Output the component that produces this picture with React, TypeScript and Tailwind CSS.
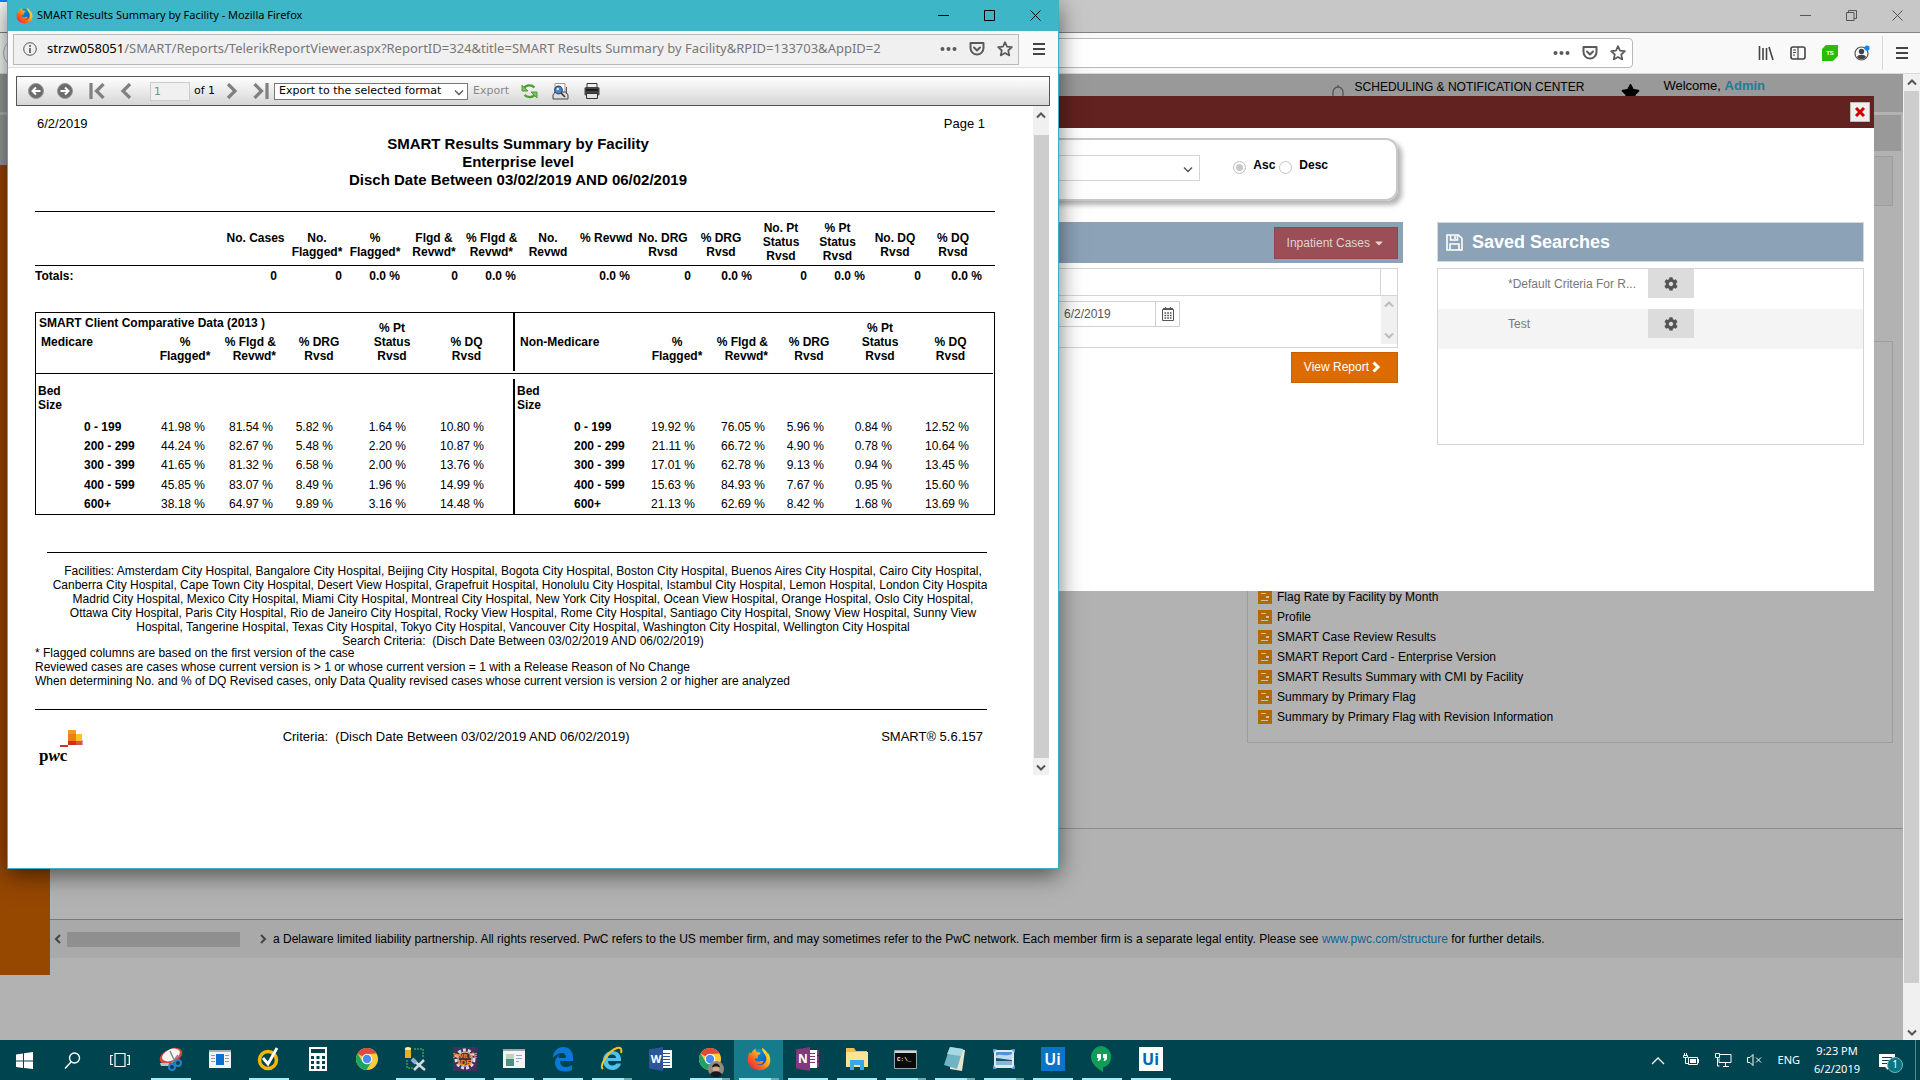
import React from "react";
import { FaCog, FaStar, FaCaretDown } from "react-icons/fa";

const ARIAL = "font-['Liberation_Sans',Arial,sans-serif]";
const UI = "font-['Noto_Sans','Open_Sans',sans-serif]";

type Dir = "up" | "down" | "left" | "right";

const CHEVRONS: Record<Dir, string> = {
  up: "M2 7.5 L6 3.5 L10 7.5",
  down: "M2 4.5 L6 8.5 L10 4.5",
  left: "M8 2 L4 6 L8 10",
  right: "M4 2 L8 6 L4 10",
};

function Chevron({ dir, color = "#555", width = 2 }: { dir: Dir; color?: string; width?: number }) {
  return (
    <svg width="12" height="12" viewBox="0 0 12 12" fill="none" stroke={color} strokeWidth={width} aria-hidden="true">
      <path d={CHEVRONS[dir]} />
    </svg>
  );
}

function FirefoxLogo({ size }: { size: number }) {
  return (
    <svg width={size} height={size} viewBox="0 0 32 32" aria-hidden="true">
      <defs>
        <linearGradient id="fxBody" x1="1" y1="0" x2="0" y2="1">
          <stop offset="0" stopColor="#fff14a" />
          <stop offset="0.35" stopColor="#ffb81c" />
          <stop offset="0.65" stopColor="#ff5e1f" />
          <stop offset="1" stopColor="#e3134f" />
        </linearGradient>
        <linearGradient id="fxGlobe" x1="0" y1="0" x2="1" y2="1">
          <stop offset="0" stopColor="#00b3f4" />
          <stop offset="1" stopColor="#1b3ea8" />
        </linearGradient>
      </defs>
      <circle cx="16" cy="15" r="12" fill="url(#fxGlobe)" />
      <path
        d="M3 7c1 1 2 1 3 1 1-3 3-5 6-6-1 2-1 3 0 4 2 1 5 1 6 2 0 2-3 2-4 4 1 1 1 2 0 3-2 0-3 0-4 1 1 3 4 4 7 3 3-1 5 0 5 1-2 3-7 4-10 2 3 3 9 3 12-1 3-4 2-9-1-12-1-2-3-4-3-8 5 3 7 6 8 9 0-1 0-2-1-3 3 3 4 7 4 11 0 8-7 13-15 13S1 25 1 17c0-4 1-7 2-10z"
        fill="url(#fxBody)"
      />
    </svg>
  );
}

function ChromeLogo() {
  return (
    <svg width="24" height="28" viewBox="0 0 24 28" aria-hidden="true">
      <g transform="translate(0 2)">
        <circle cx="12" cy="12" r="11" fill="#fccb3a" />
        <path d="M12 12 L2.5 6.5 A11 11 0 0 1 21.5 6.500 L12 7z" fill="#dd4b3e" />
        <path d="M2.500 6.500 A11 11 0 0 0 11.500 23 L16.500 14.500 L7.500 14.500z" fill="#1da462" />
        <circle cx="12" cy="12" r="5.300" fill="#fff" />
        <circle cx="12" cy="12" r="4.200" fill="#4a8af4" />
      </g>
    </svg>
  );
}

function WindowButtons({ color, restore }: { color: string; restore?: boolean }) {
  return (
    <div className="flex">
      <button aria-label="Minimize" className="flex h-[31px] w-[46px] items-center justify-center">
        <svg width="11" height="11" stroke={color} fill="none"><path d="M0 5.500h11" /></svg>
      </button>
      <button aria-label="Maximize" className="flex h-[31px] w-[46px] items-center justify-center">
        {restore ? (
          <svg width="11" height="11" stroke={color} fill="none"><path d="M.5 2.500h7.500v8h-7.500zM2.500 2.500v-2h8v8h-2.500" /></svg>
        ) : (
          <svg width="11" height="11" stroke={color} fill="none"><path d="M.5 .5h10v10h-10z" /></svg>
        )}
      </button>
      <button aria-label="Close" className="flex h-[31px] w-[46px] items-center justify-center">
        <svg width="11" height="11" stroke={color} fill="none"><path d="M.5 .5l10 10M10.500 .5l-10 10" /></svg>
      </button>
    </div>
  );
}

function AddressActions() {
  return (
    <div className="flex shrink-0 items-center gap-3">
      <button aria-label="Page actions">
        <svg width="17" height="16" fill="#5a5a5c"><circle cx="2.500" cy="8" r="2" /><circle cx="8.500" cy="8" r="2" /><circle cx="14.500" cy="8" r="2" /></svg>
      </button>
      <button aria-label="Save to Pocket">
        <svg width="16" height="16" viewBox="0 0 16 16" fill="none" stroke="#5a5a5c" strokeWidth="2" strokeLinecap="round" strokeLinejoin="round"><path d="M1.500 2h13v5a6.500 6.500 0 0 1-13 0z" /><path d="M5 6.500l3 3 3-3" /></svg>
      </button>
      <button aria-label="Bookmark this page">
        <svg width="16" height="16" viewBox="0 0 16 16" fill="none" stroke="#5a5a5c" strokeWidth="1.700" strokeLinejoin="round"><path d="M8 1.200l2 4.500 4.900.5-3.700 3.300 1.100 4.900L8 11.900l-4.300 2.500 1.100-4.900L1.100 6.200l4.900-.5z" /></svg>
      </button>
    </div>
  );
}

function MenuIcon() {
  return (
    <svg width="12" height="14" stroke="#444" strokeWidth="2"><path d="M0 2h12M0 7h12M0 12h12" /></svg>
  );
}

/* ---------- Main browser window ---------- */

const REPORT_LINKS = [
  "Flag Rate by Facility by Month",
  "Profile",
  "SMART Case Review Results",
  "SMART Report Card - Enterprise Version",
  "SMART Results Summary with CMI by Facility",
  "Summary by Primary Flag",
  "Summary by Primary Flag with Revision Information",
];

function ReportIcon() {
  return (
    <svg width="14" height="14" viewBox="0 0 14 14" className="shrink-0" aria-hidden="true">
      <path fill="#b06a00" d="M0 0h14v14H0z" />
      <path stroke="#c9c2b6" fill="none" d="M3 3.500h5M8 6.500h3M8 7.500h3M3 10.500h7" />
    </svg>
  );
}

function BrowserChrome() {
  return (
    <header className="shrink-0">
      <div className="flex h-[33px] justify-between border-b border-[#828282] bg-[#c7c7c7]">
        <div className="w-60 border-t-2 border-[#0a84ff] bg-[#f9f9f9]" />
        <WindowButtons color="#555" restore />
      </div>
      <div className="flex h-[41px] items-center border-b border-[#d8d8d8] bg-[#f9f9f9] pl-[3px] pr-3">
        <button aria-label="Back" className="mr-24 size-[30px] shrink-0 rounded-full border border-[#b0b0b0] bg-white" />
        <div className="mr-[125px] flex h-[30px] flex-1 items-center justify-end rounded-sm border border-[#b9b9b9] bg-white pr-[6px]">
          <AddressActions />
        </div>
        <div className="flex items-center gap-4">
          <button aria-label="Library">
            <svg width="16" height="16" stroke="#444" strokeWidth="1.600"><path d="M1.500 1v14M5 3v12M8.500 3v12M11 2l4 13" /></svg>
          </button>
          <button aria-label="Sidebars">
            <svg width="16" height="16" fill="none" stroke="#444" strokeWidth="1.600"><rect x="1" y="2" width="14" height="12" rx="2" /><path d="M8 2v12M3 5h3M3 7.500h3M3 10h2" strokeWidth="1.200" /></svg>
          </button>
          <button aria-label="TS extension">
            <svg width="16" height="16"><path d="M4 0h12v11l-5 5H0V4z" fill="#27bf06" /><text x="8" y="10" textAnchor="middle" fontSize="6" fontWeight="700" fill="#fff" fontFamily="Liberation Sans">TS</text></svg>
          </button>
          <button aria-label="Account">
            <svg width="16" height="16" viewBox="0 0 16 16"><circle cx="7.500" cy="8.500" r="6.500" fill="none" stroke="#555" strokeWidth="1.200" /><circle cx="7.500" cy="6.500" r="2.700" fill="#444" /><path d="M3 12c1-3 8-3 9 0-2 3-7 3-9 0z" fill="#444" /><circle cx="13" cy="3" r="2.600" fill="#0a84ff" /></svg>
          </button>
        </div>
        <div className="ml-3 mr-[13px] h-[34px] w-px bg-[#d8d8d8]" />
        <button aria-label="Menu"><MenuIcon /></button>
      </div>
    </header>
  );
}

function SavedSearchRow({ name, shaded }: { name: string; shaded?: boolean }) {
  return (
    <li className={shaded ? "flex h-10 items-start bg-[#f4f4f4] pl-[70px]" : "flex h-10 items-start pl-[70px]"}>
      <a href="#" className="w-[140px] whitespace-nowrap pt-2 leading-[14px] text-[#777]">{name}</a>
      <button aria-label={`Options for ${name}`} className="flex h-[29px] w-[46px] items-center justify-center bg-[#dcdcdc] text-[#555]">
        <FaCog size={14} />
      </button>
    </li>
  );
}

function CriteriaDialog() {
  return (
    <section role="dialog" aria-label="Report criteria" className="absolute inset-x-[29px] top-[22px] min-h-[495px] bg-white text-xs">
      <div className="flex h-8 items-center justify-end bg-[#612220] pr-1">
        <button aria-label="Close dialog" className="flex size-5 items-center justify-center border border-[#bbb] bg-[#eee]">
          <svg width="10" height="10" stroke="#d00000" strokeWidth="3"><path d="M1 1l8 8M9 1L1 9" /></svg>
        </button>
      </div>
      <div className="flex pr-[10px]">
        <div className="mr-[34px] min-w-0 flex-1 pl-4 pt-[10px]">
          <div className="mr-[5px] flex h-[63px] items-start justify-end rounded-xl border-2 border-[#c8c8c8] pt-[15px] shadow-[4px_4px_5px_rgba(0,0,0,0.3)]">
            <div className="relative">
              <select aria-label="Sort by" className="h-[26px] w-80 appearance-none border border-[#d5d5d5] bg-white" />
              <span className="pointer-events-none absolute right-[6px] top-2"><Chevron dir="down" width={1.5} /></span>
            </div>
            <div className="ml-[33px] mr-[68px] flex items-start font-bold leading-4">
              <input id="asc" type="radio" name="order" defaultChecked className="mr-[7px] mt-[6px] size-[13px] appearance-none rounded-full border border-[#c4c4c4] bg-[#c8c8c8] ring-2 ring-inset ring-white" />
              <label htmlFor="asc" className="pt-[2px]">Asc</label>
              <input id="desc" type="radio" name="order" className="ml-1 mr-[7px] mt-[6px] size-[13px] appearance-none rounded-full border border-[#c4c4c4] bg-white" />
              <label htmlFor="desc" className="pt-[2px]">Desc</label>
            </div>
          </div>
          <div className="mt-[21px] flex h-[41px] items-center justify-end bg-[#8ca2b7] pr-[5px]">
            <button className="flex h-8 items-center gap-[3px] border border-[#8f454c] bg-[#9b4e55] px-3 text-[#dfd3d6]">
              Inpatient Cases <FaCaretDown size={12} />
            </button>
          </div>
          <div className="mr-[5px] mt-[5px] border border-[#d5d5d5]">
            <div className="flex h-[27px] justify-end border-b border-[#d5d5d5]"><div className="w-[17px] border-l border-[#d5d5d5]" /></div>
            <div className="flex h-[51px] justify-end">
              <div className="mr-[201px] mt-[5px] flex h-[26px] border border-[#d0d0d0]">
                <input aria-label="End date" defaultValue="6/2/2019" className="w-[96px] pl-[5px] text-[#555]" />
                <button aria-label="Open calendar" className="flex w-6 items-center justify-center border-l border-[#d0d0d0]">
                  <svg width="12" height="14" fill="none" stroke="#555"><path d="M.5 2.500h11v11H.5zM1 1.500h10M3.500 0v2M8.500 0v2" /><path d="M2.500 6h7M2.500 8.500h7M2.500 11h7" strokeWidth="1.500" strokeDasharray="1.700 1" /></svg>
                </button>
              </div>
              <div className="flex h-12 w-4 flex-col items-center justify-between bg-[#f0f0f0] py-[3px]">
                <Chevron dir="up" color="#bbb" /><Chevron dir="down" color="#bbb" />
              </div>
            </div>
          </div>
          <div className="mr-[5px] mt-1 flex justify-end">
            <button className="flex h-[31px] items-center border border-[#c86000] bg-[#de6b00] pb-[2px] pl-3 pr-4 text-white">
              View Report
              <svg width="9" height="12" className="ml-[3px]" fill="none" stroke="#fff" strokeWidth="3"><path d="M1.500 1.500L6 6l-4.500 4.500" /></svg>
            </button>
          </div>
        </div>
        <div className="w-[427px] shrink-0 pt-[94px]">
          <h2 className="flex h-10 items-center gap-[9px] border border-[#d5d8dc] bg-[#8ca2b7] px-2 text-lg font-bold text-white">
            <svg width="17" height="17" fill="none" stroke="#fff" strokeWidth="1.600"><path d="M1 1h11.500L16 4.500V16H1zM4.500 1v5h7V1M4 16v-6h9v6" /><path d="M9 2v3" /></svg>
            Saved Searches
          </h2>
          <ul className="mt-[6px] h-[177px] border border-[#d5d5d5]">
            <SavedSearchRow name="*Default Criteria For R..." />
            <SavedSearchRow name="Test" shaded />
          </ul>
        </div>
      </div>
    </section>
  );
}

function MainPage() {
  return (
    <div className="flex min-h-0 flex-1">
      <main className="relative flex min-w-0 flex-1 flex-col bg-[#b2b2b2] text-xs text-black">
        <div className="flex h-[38px] justify-end bg-[#999] pr-[138px]">
          <svg width="12" height="16" className="mr-[11px] mt-[11px]" fill="none" stroke="#555" strokeWidth="1.300"><path d="M6 0v2M1 14V7a5 5 0 0 1 10 0v7" /></svg>
          <span className="pt-[5px] leading-4">SCHEDULING &amp; NOTIFICATION CENTER</span>
          <FaStar size={19} className="ml-[37px] mr-[23px] mt-[9px]" />
          <span className="pt-1 text-[13px] leading-4">Welcome, <a href="#" className="font-bold text-[#1f7c98]">Admin</a></span>
        </div>
        <div className="mr-[2px] mt-[3px] h-9 bg-[#999]" />
        <div className="flex h-[824px]">
          <aside className="w-[50px] shrink-0 border-t-[14px] border-[#999] bg-[#964700]" />
          <div className="flex min-w-0 flex-1 flex-col">
            <div className="ml-3 mr-[10px] mt-[5px] h-[50px] border border-[#9d9d9d] bg-[#aaa]" />
            <ul className="ml-auto mr-[10px] mt-[135px] flex h-[402px] w-[646px] flex-col justify-end border border-[#9d9d9d] pb-[15px] pl-[10px]">
              {REPORT_LINKS.map((r) => (
                <li key={r} className="flex h-5 items-center gap-[5px]"><ReportIcon /><a href="#" className="leading-4">{r}</a></li>
              ))}
            </ul>
            <hr className="mt-[85px] border-[#8c8c8c]" />
            <footer className="mt-[90px] flex h-[39px] items-center border-t border-[#777] bg-[#a9a9a9]">
              <div className="mr-1 flex h-[15px] w-[219px] shrink-0 items-center justify-between pl-[2px]">
                <Chevron dir="left" color="#444" />
                <span className="mr-auto ml-[3px] h-[15px] w-[173px] bg-[#8f8f8f]" />
                <Chevron dir="right" color="#444" />
              </div>
              <p className="truncate">
                a Delaware limited liability partnership. All rights reserved. PwC refers to the US member firm, and may sometimes refer to the PwC network. Each member firm is a separate legal entity. Please see{" "}
                <a href="#" className="text-[#0d6594]">www.pwc.com/structure</a> for further details.
              </p>
            </footer>
          </div>
        </div>
        <CriteriaDialog />
      </main>
      <div className="flex w-[17px] flex-col items-center bg-[#f0f0f0]">
        <div className="flex h-[17px] items-center"><Chevron dir="up" /></div>
        <div className="h-[892px] w-[15px] bg-[#cdcdcd]" />
        <div className="mt-auto flex h-[17px] items-center"><Chevron dir="down" /></div>
      </div>
    </div>
  );
}

/* ---------- Report window ---------- */

type TotalCol = { head: string[]; value: string; w: string; th: string; td: string };

const TOTAL_COLS: TotalCol[] = [
  { head: ["No. Cases"], value: "0", w: "w-[61px]", th: "pt-[19px]", td: "pr-[9px]" },
  { head: ["No.", "Flagged*"], value: "0", w: "w-[62px]", th: "pt-[19px]", td: "pr-[6px]" },
  { head: ["%", "Flagged*"], value: "0.0 %", w: "w-[54px]", th: "pt-[19px]", td: "pr-[2px]" },
  { head: ["Flgd &", "Revwd*"], value: "0", w: "w-[64px]", th: "pt-[19px]", td: "pr-[8px]" },
  { head: ["% Flgd &", "Revwd*"], value: "0.0 %", w: "w-[50px]", th: "pt-[19px] pr-[3px] text-right", td: "" },
  { head: ["No.", "Revwd"], value: "", w: "w-[64px]", th: "pt-[19px]", td: "" },
  { head: ["% Revwd"], value: "0.0 %", w: "w-[52px]", th: "pt-[19px]", td: "pr-[2px]" },
  { head: ["No. DRG", "Rvsd"], value: "0", w: "w-[62px]", th: "pt-[19px]", td: "pr-[3px]" },
  { head: ["% DRG", "Rvsd"], value: "0.0 %", w: "w-[60px]", th: "pt-[19px] pr-[6px]", td: "pr-[2px]" },
  { head: ["No. Pt", "Status", "Rvsd"], value: "0", w: "w-[54px]", th: "pt-[9px]", td: "pr-px" },
  { head: ["% Pt", "Status", "Rvsd"], value: "0.0 %", w: "w-[59px]", th: "pt-[9px]", td: "pr-[2px]" },
  { head: ["No. DQ", "Rvsd"], value: "0", w: "w-[56px]", th: "pt-[19px]", td: "pr-[2px]" },
  { head: ["% DQ", "Rvsd"], value: "0.0 %", w: "w-[60px]", th: "pt-[19px]", td: "pr-px" },
];

function TotalsTable() {
  return (
    <table className="w-[960px] table-fixed border-collapse border-t border-black text-xs font-bold leading-[14px]">
      <thead>
        <tr className="h-[54px] border-b border-black align-top">
          <td className="w-[190px]" />
          {TOTAL_COLS.map((c, i) => (
            <th key={i} scope="col" className={`${c.w} ${c.th} whitespace-nowrap`}>
              {c.head.map((h) => <div key={h}>{h}</div>)}
            </th>
          ))}
          <td />
        </tr>
      </thead>
      <tbody>
        <tr className="h-[21px]">
          <th scope="row" className="text-left">Totals:</th>
          {TOTAL_COLS.map((c, i) => <td key={i} className={`${c.td} whitespace-nowrap text-right`}>{c.value}</td>)}
          <td />
        </tr>
      </tbody>
    </table>
  );
}

const COMP_HEADS = [["%", "Flagged*"], ["% Flgd &", "Revwd*"], ["% DRG", "Rvsd"], ["% Pt", "Status", "Rvsd"], ["% DQ", "Rvsd"]];
const BEDS = ["0 - 199", "200 - 299", "300 - 399", "400 - 599", "600+"];

const MEDICARE = [
  ["41.98 %", "81.54 %", "5.82 %", "1.64 %", "10.80 %"],
  ["44.24 %", "82.67 %", "5.48 %", "2.20 %", "10.87 %"],
  ["41.65 %", "81.32 %", "6.58 %", "2.00 %", "13.76 %"],
  ["45.85 %", "83.07 %", "8.49 %", "1.96 %", "14.99 %"],
  ["38.18 %", "64.97 %", "9.89 %", "3.16 %", "14.48 %"],
];
const NON_MEDICARE = [
  ["19.92 %", "76.05 %", "5.96 %", "0.84 %", "12.52 %"],
  ["21.11 %", "66.72 %", "4.90 %", "0.78 %", "10.64 %"],
  ["17.01 %", "62.78 %", "9.13 %", "0.94 %", "13.45 %"],
  ["15.63 %", "84.93 %", "7.67 %", "0.95 %", "15.60 %"],
  ["21.13 %", "62.69 %", "8.42 %", "1.68 %", "13.69 %"],
];

type CompLayout = { table: string; widths: string[]; pads: string[]; label: string };

const LEFT_LAYOUT: CompLayout = {
  table: "w-[477px]",
  widths: ["w-[114px]", "w-[70px]", "w-[58px]", "w-[82px]", "w-[64px]", "w-[89px]"],
  pads: ["pr-[15px]", "pr-[5px]", "pr-[27px]", "pr-[18px]", "pr-[29px]"],
  label: "pl-12",
};
const RIGHT_LAYOUT: CompLayout = {
  table: "w-[478px]",
  widths: ["w-[127px]", "w-[70px]", "w-[58px]", "w-[78px]", "w-[64px]", "w-[81px]"],
  pads: ["pr-[17px]", "pr-[5px]", "pr-[24px]", "pr-[20px]", "pr-[24px]"],
  label: "pl-[59px]",
};

function CompTable({ title, group, rows, layout }: { title?: string; group: string; rows: string[][]; layout: CompLayout }) {
  return (
    <table className={`${layout.table} table-fixed border-collapse leading-[14px]`}>
      <thead>
        <tr className="h-[61px] border-b border-black align-bottom">
          <th scope="col" className={`${layout.widths[0]} whitespace-nowrap pb-6 pl-[5px] text-left`}>
            {title && <div className="-ml-0.5 mb-[5px]">{title}</div>}
            <div>{group}</div>
          </th>
          {COMP_HEADS.map((h, i) => (
            <th key={i} scope="col" className={`${layout.widths[i + 1]} whitespace-nowrap pb-[10px] ${i === 1 ? "pr-[2px] text-right" : i === 4 ? "pr-1" : ""}`}>
              {h.map((l) => <div key={l}>{l}</div>)}
            </th>
          ))}
        </tr>
      </thead>
      <tbody>
        <tr className="h-[43px] align-top">
          <th colSpan={6} scope="rowgroup" className="pl-[2px] pt-[10px] text-left">Bed<br />Size</th>
        </tr>
        {rows.map((r, i) => (
          <tr key={i} className="h-[19px]">
            <th scope="row" className={`${layout.label} whitespace-nowrap text-left`}>{BEDS[i]}</th>
            {r.map((v, j) => <td key={j} className={`${layout.pads[j]} whitespace-nowrap text-right`}>{v}</td>)}
          </tr>
        ))}
      </tbody>
    </table>
  );
}

const FACILITY_LINES = [
  "Facilities: Amsterdam City Hospital, Bangalore City Hospital, Beijing City Hospital, Bogota City Hospital, Boston City Hospital, Buenos Aires City Hospital, Cairo City Hospital,",
  "Canberra City Hospital, Cape Town City Hospital, Desert View Hospital, Grapefruit Hospital, Honolulu City Hospital, Istambul City Hospital, Lemon Hospital, London City Hospital,",
  "Madrid City Hospital, Mexico City Hospital, Miami City Hospital, Montreal City Hospital, New York City Hospital, Ocean View Hospital, Orange Hospital, Oslo City Hospital,",
  "Ottawa City Hospital, Paris City Hospital, Rio de Janeiro City Hospital, Rocky View Hospital, Rome City Hospital, Santiago City Hospital, Snowy View Hospital, Sunny View",
  "Hospital, Tangerine Hospital, Texas City Hospital, Tokyo City Hospital, Vancouver City Hospital, Washington City Hospital, Wellington City Hospital",
  "Search Criteria:\u00a0 (Disch Date Between 03/02/2019 AND 06/02/2019)",
];

function PwcLogo() {
  return (
    <svg width="46" height="38" viewBox="0 0 46 38" role="img" aria-label="pwc">
      <path fill="#f39a1e" d="M29 0h8v12h-8z" />
      <path fill="#ef7d14" d="M29 4h8v7h-8z" />
      <path fill="#f8c51c" d="M37 4h6v7h-6z" />
      <path fill="#c9341a" d="M29 11h8v4h-8z" />
      <path fill="#d9534a" d="M37 11h6v4h-6z" />
      <path fill="#e8a0a8" d="M43 10h1v5h-1z" />
      <path fill="#cc3322" d="M21 15h8v2h-8z" />
      <text x="0" y="31" fontSize="17" fontWeight="700" fontFamily="Liberation Serif, serif">
        p<tspan fontStyle="italic">w</tspan>c
      </text>
    </svg>
  );
}

function ReportBody() {
  return (
    <div className="flex pl-[12px]">
      <div className="min-w-0 flex-1 overflow-hidden pl-[15px] pt-[10px]">
        <article className="w-[960px] text-xs text-black">
          <div className="flex justify-between pl-[2px] pr-[10px] text-[13px] leading-4">
            <span>6/2/2019</span><span>Page 1</span>
          </div>
          <h1 className="mb-[22px] mt-[3px] pl-[6px] text-center text-[15px] font-bold leading-[18px]">
            SMART Results Summary by Facility<br />Enterprise level<br />Disch Date Between 03/02/2019 AND 06/02/2019
          </h1>
          <TotalsTable />
          <section className="mt-[25px] flex h-[203px] border border-black">
            <CompTable title="SMART Client Comparative Data (2013 )" group="Medicare" rows={MEDICARE} layout={LEFT_LAYOUT} />
            <div className="flex w-[2px] flex-col">
              <div className="h-[58px] bg-black" />
              <div className="mt-[2px] mb-[5px] h-px bg-black" />
              <div className="flex-1 bg-black" />
            </div>
            <CompTable group="Non-Medicare" rows={NON_MEDICARE} layout={RIGHT_LAYOUT} />
          </section>
          <div className="ml-3 mr-2 mt-[37px] overflow-hidden border-t border-black pt-[11px]">
            <div className="w-[952px] text-center leading-[14px]">
              {FACILITY_LINES.map((l) => <div key={l} className="whitespace-nowrap">{l}</div>)}
            </div>
          </div>
          <p className="-mt-0.5 leading-[14px]">
            * Flagged columns are based on the first version of the case<br />
            Reviewed cases are cases whose current version is &gt; 1 or whose current version = 1 with a Release Reason of No Change<br />
            When determining No. and % of DQ Revised cases, only Data Quality revised cases whose current version is version 2 or higher are analyzed
          </p>
          <footer className="mr-2 mt-[21px] flex items-start justify-between border-t border-black pl-1 pr-1 pt-[18px] text-[13px] leading-[18px]">
            <span className="pt-[2px]"><PwcLogo /></span>
            <span className="mr-[54px]">Criteria:&nbsp; (Disch Date Between 03/02/2019 AND 06/02/2019)</span>
            <span>SMART® 5.6.157</span>
          </footer>
        </article>
      </div>
      <div className="mr-[9px] flex h-[669px] w-4 flex-col items-center bg-[#f0f0f0]">
        <div className="flex h-[29px] items-start pt-1"><Chevron dir="up" /></div>
        <div className="w-[15px] flex-1 bg-[#cdcdcd]" />
        <div className="flex h-[17px] items-center"><Chevron dir="down" /></div>
      </div>
    </div>
  );
}

function RoundArrow({ flip }: { flip?: boolean }) {
  return (
    <svg width="16" height="16" viewBox="0 0 16 16" className={flip ? "-scale-x-100" : ""}>
      <circle cx="8" cy="8" r="7.500" fill="#6c6c6c" stroke="#999" />
      <path d="M12.500 8H5M8 4.500L4.500 8 8 11.500" fill="none" stroke="#fff" strokeWidth="2" />
    </svg>
  );
}

function PageArrow({ end, flip }: { end?: boolean; flip?: boolean }) {
  return (
    <svg width="16" height="16" viewBox="0 0 16 16" className={flip ? "-scale-x-100" : ""} fill="none" stroke="#808080" strokeWidth="3.200">
      {end ? <path d="M2 0v16M14.500 1L7.500 8l7 7" /> : <path d="M12 1L5 8l7 7" />}
    </svg>
  );
}

function ViewerToolbar() {
  return (
    <div className="mx-2 mt-2 flex h-[30px] items-center border border-[#555] bg-linear-to-b from-white to-[#d6d6d6] pl-[11px] font-['DejaVu_Sans',Verdana,sans-serif] text-[11px]">
      <button aria-label="Navigate back"><RoundArrow /></button>
      <button aria-label="Navigate forward" className="ml-[13px]"><RoundArrow flip /></button>
      <button aria-label="First page" className="ml-4"><PageArrow end /></button>
      <button aria-label="Previous page" className="ml-[13px]"><PageArrow /></button>
      <input aria-label="Current page" disabled defaultValue="1" className="ml-4 h-[19px] w-10 border border-[#ccc] bg-[#f0f0f0] pl-[3px] text-[#888]" />
      <span className="ml-1">of 1</span>
      <button aria-label="Next page" className="ml-[9px]"><PageArrow flip /></button>
      <button aria-label="Last page" className="ml-[13px]"><PageArrow end flip /></button>
      <span className="relative ml-[5px]">
        <select aria-label="Export format" className="block h-[17px] w-[194px] appearance-none border border-[#777] bg-white pl-1 text-[11px] leading-[14px]">
          <option>Export to the selected format</option>
        </select>
        <span className="pointer-events-none absolute right-[3px] top-[3px]"><Chevron dir="down" width={1.3} /></span>
      </span>
      <button disabled className="ml-[5px] text-[#888]">Export</button>
      <button aria-label="Refresh" className="ml-3">
        <svg width="17" height="17" viewBox="0 0 17 17" fill="none" stroke="#4f9e35" strokeWidth="2.400"><path d="M2.500 5.500c3-4 8-4 11-1M14.500 11c-3 4-8 4-11 1" /><path d="M1 2v6h6z M16 15V9h-6z" fill="#7cc35b" strokeWidth="1" /></svg>
      </button>
      <button aria-label="Print preview" className="ml-[14px]">
        <svg width="17" height="17" viewBox="0 0 17 17"><path d="M3 .5h10v9H3z" fill="#fff" stroke="#999" /><path d="M1 12l2-3h11l2 3v4H1z" fill="#ddd" stroke="#444" /><circle cx="6.500" cy="7" r="3.800" fill="#4a86c8" stroke="#334a6a" strokeWidth="1.200" /><circle cx="5.800" cy="6" r="1.300" fill="#d6e8fa" /><path d="M9 10l4 4" stroke="#333" strokeWidth="1.600" /><path d="M14.500 4v7" stroke="#555" /></svg>
      </button>
      <button aria-label="Print" className="ml-[15px]">
        <svg width="16" height="16" viewBox="0 0 16 16"><path d="M3 .5h10v4H3z" fill="#eee" stroke="#333" /><rect x="0.500" y="4" width="15" height="8.500" rx="1.500" fill="#444" /><path d="M2 7h12" stroke="#111" strokeWidth="1.500" /><path d="M2.500 10.500h11v5h-11z" fill="#e4e4e4" stroke="#333" /></svg>
      </button>
    </div>
  );
}

function ReportWindow() {
  return (
    <section className={`${ARIAL} absolute left-[7px] top-0 z-10 h-[869px] w-[1052px] border border-t-0 border-[#3fb0c2] bg-white shadow-[0_6px_22px_rgba(0,0,0,0.55)]`}>
      <div className="flex h-[31px] items-center bg-[#3db6c8] pl-2">
        <FirefoxLogo size={17} />
        <h1 className={`${UI} ml-1 flex-1 text-[11px] text-black`}>SMART Results Summary by Facility - Mozilla Firefox</h1>
        <WindowButtons color="#000" />
      </div>
      <div className="flex h-[37px] items-center border-b border-[#dedede] bg-[#f9f9f9] pl-[5px] pr-[13px]">
        <div className="flex h-[31px] min-w-0 flex-1 items-center border border-[#b9b9b9] bg-[#f0f0f0] pl-[9px] pr-[5px]">
          <svg width="14" height="14" className="mr-[10px] shrink-0" fill="none" stroke="#555"><circle cx="7" cy="7" r="6.300" /><path d="M7 6v5M7 3v2" strokeWidth="1.600" /></svg>
          <p className={`${UI} flex-1 whitespace-nowrap text-[13px] text-[#777]`}>
            <span className="text-black">strzw058051</span>/SMART/Reports/TelerikReportViewer.aspx?ReportID=324&amp;title=SMART Results Summary by Facility&amp;RPID=133703&amp;AppID=2
          </p>
          <AddressActions />
        </div>
        <button aria-label="Menu" className="ml-[14px]"><MenuIcon /></button>
      </div>
      <ViewerToolbar />
      <ReportBody />
    </section>
  );
}

/* ---------- Taskbar ---------- */

type Task = { name: string; icon: React.ReactNode; open?: boolean; multi?: boolean; active?: boolean };

function UiTile({ inverted }: { inverted?: boolean }) {
  return (
    <span className={inverted
      ? "flex h-6 w-6 items-center justify-center border-2 border-[#fff] bg-white text-base font-bold text-[#0067b3]"
      : "flex h-6 w-6 items-center justify-center bg-[#0a74c8] text-base font-semibold text-white"}>Ui</span>
  );
}

const TASKS: Task[] = [
  { name: "Snipping Tool", open: true, icon: <svg width="26" height="26" viewBox="0 0 26 26"><ellipse cx="13" cy="10" rx="12" ry="7" transform="rotate(-25 13 10)" fill="#d94a3d" /><ellipse cx="13" cy="9" rx="9.500" ry="5.500" transform="rotate(-25 13 9)" fill="#f5f5f5" /><path d="M12 5l5 11M20 9l-7 9" stroke="#8a8a8a" strokeWidth="1.500" /><path d="M2 17h9v3H3z" fill="#b8c4c8" /><circle cx="14" cy="21" r="3" fill="none" stroke="#2a80c8" strokeWidth="2" /><circle cx="20" cy="17" r="3" fill="none" stroke="#2a80c8" strokeWidth="2" /></svg> },
  { name: "News", icon: <svg width="22" height="18"><path fill="#f2f2f2" d="M0 0h22v18H0z" /><path fill="#a7afb3" d="M0 0h22v2H0z" /><path fill="#0b6fd0" d="M7 4h8v11H7z" /><path stroke="#999" d="M2 5.500h4M2 8.500h4M2 11.500h4M16 5.500h4M16 8.500h4M16 11.500h4" /></svg> },
  { name: "Norton", open: true, icon: <svg width="24" height="26" viewBox="0 0 24 26" fill="none"><circle cx="11" cy="14" r="8.500" stroke="#f8b50a" strokeWidth="3.500" /><path d="M6 12l5 6L20 2" stroke="#fff" strokeWidth="2.800" /></svg> },
  { name: "Calculator", icon: <svg width="18" height="24"><path fill="#fff" d="M0 0h18v24H0z" /><path fill="#00434f" d="M2 2h14v4H2zM2 9h3v3H2zM7.500 9h3v3h-3zM13 9h3v3h-3zM2 14h3v3H2zM7.500 14h3v3h-3zM13 14h3v3h-3zM2 19h3v3H2zM7.500 19h3v3h-3zM13 19h3v3h-3z" /></svg> },
  { name: "Chrome", icon: <ChromeLogo /> },
  { name: "SQL Server tools", open: true, icon: <svg width="24" height="24"><path fill="#e8b21e" d="M1 1h6v10H1z" /><ellipse cx="4" cy="1.500" rx="3" ry="1.500" fill="#fff0a8" /><path d="M10 2h9v8M3 13v8h7" fill="none" stroke="#3e9a4e" strokeDasharray="2 1" strokeWidth="1.500" /><path d="M9 13l12 10M20 13L10 23" stroke="#d0dae0" strokeWidth="2.500" /><path d="M8 12l4 4" stroke="#8fb0c8" strokeWidth="4" /></svg> },
  { name: "Java EE IDE", open: true, icon: <svg width="24" height="24"><path fill="#44305c" d="M0 0h24v24H0z" /><circle cx="12" cy="12" r="9" fill="none" stroke="#ddd" strokeWidth="3" strokeDasharray="3 2" /><circle cx="12" cy="12" r="7" fill="#4a3038" stroke="#ddd" /><text x="12" y="11" fontSize="7" fontWeight="700" textAnchor="middle" fill="#ef8a28" fontFamily="Liberation Sans">Java EE</text><text x="12" y="18" fontSize="8" fontWeight="700" textAnchor="middle" fill="#ef8a28" fontFamily="Liberation Sans">IDE</text></svg> },
  { name: "Report viewer", open: true, icon: <svg width="22" height="20"><path fill="#f4f4f4" d="M0 0h22v19H0z" /><path fill="#9aa7ad" d="M0 0h22v2H0z" /><path fill="#4d8f80" d="M3 5h8v12H3z" /><path fill="#b8d6c0" d="M3 5h8v5H3z" /><path stroke="#8fa8c8" d="M13 6.500h6M13 9.500h6M13 12.500h3" /></svg> },
  { name: "Edge", open: true, icon: <svg width="22" height="26" viewBox="0 0 22 26"><path fill="#0a78d7" d="M1 12C1 5 6 1 11 1c7 0 10 5 10 10v4H8c0 4 3 6 6 6 2 0 4-.6 6-2v5c-2 1-4 1.500-7 1.500-7 0-10-4-10-9 0-3 2-6 5-8-1 1-1.500 2-1.500 3.500H14c0-3-1-5-4-5-4 0-7 2-9 5z" /></svg> },
  { name: "Internet Explorer", open: true, multi: true, icon: <svg width="24" height="26" viewBox="0 0 24 26"><path fill="#4fc0f0" d="M21 15H8c0 3 2 4.500 4.500 4.500 2 0 3-.8 3.800-2H21c-1 4-4.500 6.500-8.500 6.500C7 24 3 20 3 14.500S7 5 12.500 5C18 5 21.500 9 21 15zM8 12h8c0-2-1.500-3.500-4-3.500S8 10 8 12z" /><path d="M3 23C-1 20 8 5 17 2c4-1 5 1 4 5" fill="none" stroke="#f4c51f" strokeWidth="2" /></svg> },
  { name: "Word", icon: <svg width="24" height="24"><path fill="#fff" d="M12 3h11v18H12z" /><path stroke="#2b579a" d="M13 6.500h8M13 9.500h8M13 12.500h8M13 15.500h8M13 18.500h8" /><path fill="#2b579a" d="M0 2.500L14 0v24L0 21.500z" /><text x="7" y="16" fontSize="11" fontWeight="700" textAnchor="middle" fill="#fff" fontFamily="Open Sans">W</text></svg> },
  { name: "Chrome profile", open: true, multi: true, icon: <span className="relative"><ChromeLogo /><svg width="16" height="16" className="absolute -bottom-1 left-[10px]"><circle cx="8" cy="8" r="8" fill="#8f8c88" /><circle cx="8" cy="7" r="3.500" fill="#d9a98c" /><path d="M4 7c0-6 8-6 8 0-1-2-7-2-8 0z" fill="#1c1614" /><path d="M2 14c1-5 11-5 12 0-3 3-9 3-12 0z" fill="#15191d" /></svg></span> },
  { name: "Firefox", open: true, multi: true, active: true, icon: <FirefoxLogo size={24} /> },
  { name: "OneNote", open: true, icon: <svg width="24" height="24"><path fill="#fff" d="M12 3h9v18h-9z" /><path stroke="#80397b" d="M13 6.500h6M13 9.500h6M13 12.500h6M13 15.500h6" /><path fill="#80397b" d="M21 3h2v5h-2zM21 9h2v5h-2zM21 15h2v5h-2zM0 2.500L14 0v24L0 21.500z" /><text x="7" y="16" fontSize="12" fontWeight="700" textAnchor="middle" fill="#fff" fontFamily="Open Sans">N</text></svg> },
  { name: "File Explorer", open: true, icon: <svg width="22" height="22"><path fill="#f0c14c" d="M0 0h8l2 3h11v4H0z" /><path fill="#fde394" d="M0 4h22v15H0z" /><path fill="#38a9e8" d="M4 12h14v10h-4v-5H8v5H4z" /></svg> },
  { name: "Command Prompt", open: true, multi: true, icon: <svg width="23" height="19"><path fill="#0a0a0a" stroke="#9aa5a8" d="M.5 .5h22v18H.5z" /><path fill="#cfd6d8" d="M1 1h21v2H1z" /><text x="3" y="11" fontSize="6" fontWeight="700" fill="#fff" fontFamily="Liberation Mono">C:\_</text></svg> },
  { name: "Notepad", open: true, multi: true, icon: <svg width="24" height="26"><path fill="#e9e4d0" d="M8 2l14 2-3 21-12-2z" /><path fill="#6fb4c4" d="M7 1l13 2-6 20L1 19z" /><path fill="#a8d8e2" d="M7 1l13 2-2 7L4 8z" /></svg> },
  { name: "Photos", open: true, multi: true, icon: <svg width="22" height="20"><path fill="#dfe8ee" d="M1 1h20v18H1z" /><path fill="#4a94d8" d="M3 3h16v7H3z" /><path fill="#b8dcf4" d="M3 7c4-3 8 1 16-2v5H3z" /><path fill="#24506a" d="M3 9c6 1 9 1 16 2v2H3z" /><path fill="#86b9d8" d="M3 12h16v4H3z" /><path d="M0 0h4L0 4zM22 0v4l-4-4zM22 20h-4l4-4zM0 20v-4l4 4z" fill="#4a9be0" /></svg> },
  { name: "UiPath Studio", open: true, icon: <UiTile /> },
  { name: "Hangouts", open: true, icon: <svg width="22" height="26"><path fill="#109d58" d="M11 0a11 11 0 0 1 1 21.500V26C6 22 0 18 0 11A11 11 0 0 1 11 0z" /><path fill="#fff" d="M6 8h4v5l-2 2H6.500l1-3H6zM12 8h4v5l-2 2h-1.500l1-3H12z" /></svg> },
  { name: "UiPath Robot", open: true, icon: <UiTile inverted /> },
];

function Taskbar() {
  return (
    <nav aria-label="Taskbar" className={`${UI} flex h-10 shrink-0 bg-[#00444f] text-white`}>
      <button aria-label="Start" className="flex w-12 items-center justify-center">
        <svg width="17" height="17" fill="#fff"><path d="M0 2.500l7-1v7H0zM8 1.300L17 0v8.500H8zM0 9.500h7v6.500l-7-1zM8 9.500h9V17l-9-1z" /></svg>
      </button>
      <button aria-label="Search" className="flex w-12 items-center justify-center">
        <svg width="17" height="17" fill="none" stroke="#fff" strokeWidth="1.400"><circle cx="10.500" cy="6" r="5" /><path d="M7 10l-6 6.500" /></svg>
      </button>
      <button aria-label="Task view" className="mr-[2px] flex w-12 items-center justify-center">
        <svg width="20" height="16" fill="none" stroke="#fff" strokeWidth="1.200"><path d="M5 1.500h10v13H5zM3 3.500H.700v9H3M17 3.500h2.300v9H17" /></svg>
      </button>
      {TASKS.map((t) => (
        <button key={t.name} aria-label={t.name} className={t.active ? "flex w-[49px] flex-col bg-[#167c8c]" : "flex w-[49px] flex-col"}>
          <span className="flex h-[38px] w-full items-center justify-center">{t.icon}</span>
          {t.open && (
            <span className="mx-auto flex h-[2px] w-10">
              <span className="flex-1 bg-[#a5edf8]" />
              {t.multi && <span className="w-2 bg-[#6fa9b3]" />}
            </span>
          )}
        </button>
      ))}
      <div className="ml-auto flex items-center text-xs">
        <button aria-label="Show hidden icons" className="mr-[18px]"><svg width="14" height="9" fill="none" stroke="#fff" strokeWidth="1.300"><path d="M1 8l6-6 6 6" /></svg></button>
        <button aria-label="Battery" className="mr-[15px]"><svg width="17" height="14" stroke="#fff" fill="none"><path d="M5.500 4.500h9v7h-9zM15.500 6v4" /><path d="M7 6h6v4H7z" fill="#fff" stroke="none" /><path d="M1.500 0v2M3.500 0v2M.5 2.500h4v2h-4zM2.500 5v5.500h3" /></svg></button>
        <button aria-label="Network" className="mr-[15px]"><svg width="17" height="14" stroke="#fff" fill="none"><path d="M5 1.500h11v8H4v-4M8 13.500h6M10.500 10v3M.5 .5h4v4h-4zM2.500 5v8h2" /></svg></button>
        <button aria-label="Volume muted" className="mr-[15px]"><svg width="16" height="14" stroke="#fff" fill="none"><path d="M.5 4.500h2.500l3-3v11l-3-3H.5zM9 4.500l5 5M14 4.500l-5 5" /></svg></button>
        <span className="mr-[14px] text-[11px]">ENG</span>
        <time className="mr-[19px] text-center text-[11px] leading-[18px]">9:23 PM<br />6/2/2019</time>
        <button aria-label="Notifications" className="relative mr-3 h-[26px] w-6">
          <svg width="16" height="16" className="mt-[3px]"><path fill="#fff" d="M0 0h16v13H9v3l-3-3H0z" /><path stroke="#00444f" d="M3 3.500h10M3 6.500h10M3 9.500h5" /></svg>
          <span className="absolute bottom-0 right-0 flex size-4 items-center justify-center rounded-full border border-[#6fb6c0] bg-[#0b7480] text-[10px]">1</span>
        </button>
        <span className="mr-1 h-10 w-px bg-[#5d8a92]" />
      </div>
    </nav>
  );
}

export default function App() {
  return (
    <div className={`${ARIAL} relative flex h-screen flex-col overflow-hidden`}>
      <BrowserChrome />
      <MainPage />
      <Taskbar />
      <ReportWindow />
    </div>
  );
}
